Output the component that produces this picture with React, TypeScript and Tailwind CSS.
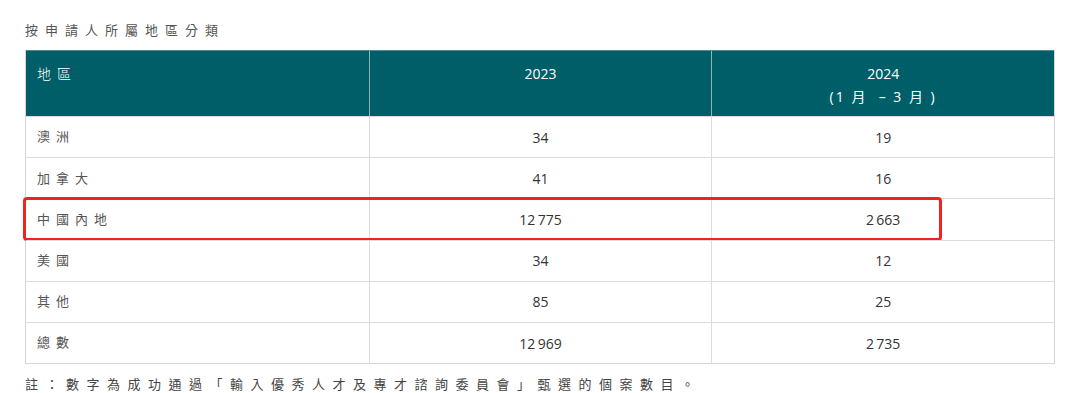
import { type FC } from "react";

const rows = [
  { region: "澳洲", y2023: "34", y2024: "19" },
  { region: "加拿大", y2023: "41", y2024: "16" },
  { region: "中國內地", y2023: "12\u2009775", y2024: "2\u2009663", marked: true },
  { region: "美國", y2023: "34", y2024: "12" },
  { region: "其他", y2023: "85", y2024: "25" },
  { region: "總數", y2023: "12\u2009969", y2024: "2\u2009735" },
];

const App: FC = () => {
  return (
    <div className="bg-white w-[1080px] h-[393px] overflow-hidden px-[25px] pt-[20px] font-['Open_Sans','Noto_Sans_CJK_TC',sans-serif]">
      <div className="text-[13px] leading-[20px] tracking-[7px] text-[#555]">按申請人所屬地區分類</div>

      <div className="mt-[10px] w-[1030px] border-x border-b border-[#d6d6d6]">
        <div className="grid grid-cols-3 h-[66px] bg-[#005e69] text-white text-[14px] leading-[23px] border-t border-[#4f8c92]">
          <div className="pl-[11px] pt-[11px] tracking-[6px] font-light">地區</div>
          <div className="border-l border-[#8fb4b8] pt-[11px] text-center">2023</div>
          <div className="border-l border-[#8fb4b8] pt-[11px] text-center">
            <div>2024</div>
            <div className="whitespace-pre tracking-[2px]">(1 月  – 3 月 )</div>
          </div>
        </div>

        {rows.map((r) => (
          <div
            key={r.region}
            className="relative grid grid-cols-3 h-[41.2px] items-center border-t border-[#dcdcdc] text-[14px] text-[#333]"
          >
            <div className="pl-[11px] tracking-[6px] text-[#555] text-[13px]">{r.region}</div>
            <div className="h-full flex items-center justify-center border-l border-[#dcdcdc]">{r.y2023}</div>
            <div className="h-full flex items-center justify-center border-l border-[#dcdcdc]">{r.y2024}</div>
            {r.marked && (
              <div className="absolute left-[-3px] top-[-2px] w-[919px] h-[44px] border-[3px] border-[#f5211f] rounded-[4px] pointer-events-none" />
            )}
          </div>
        ))}
      </div>

      <div className="mt-[10px] text-[13px] leading-[20px] tracking-[7.5px] text-[#444]">
        註：數字為成功通過「輸入優秀人才及專才諮詢委員會」甄選的個案數目。
      </div>
    </div>
  );
};

export default App;
